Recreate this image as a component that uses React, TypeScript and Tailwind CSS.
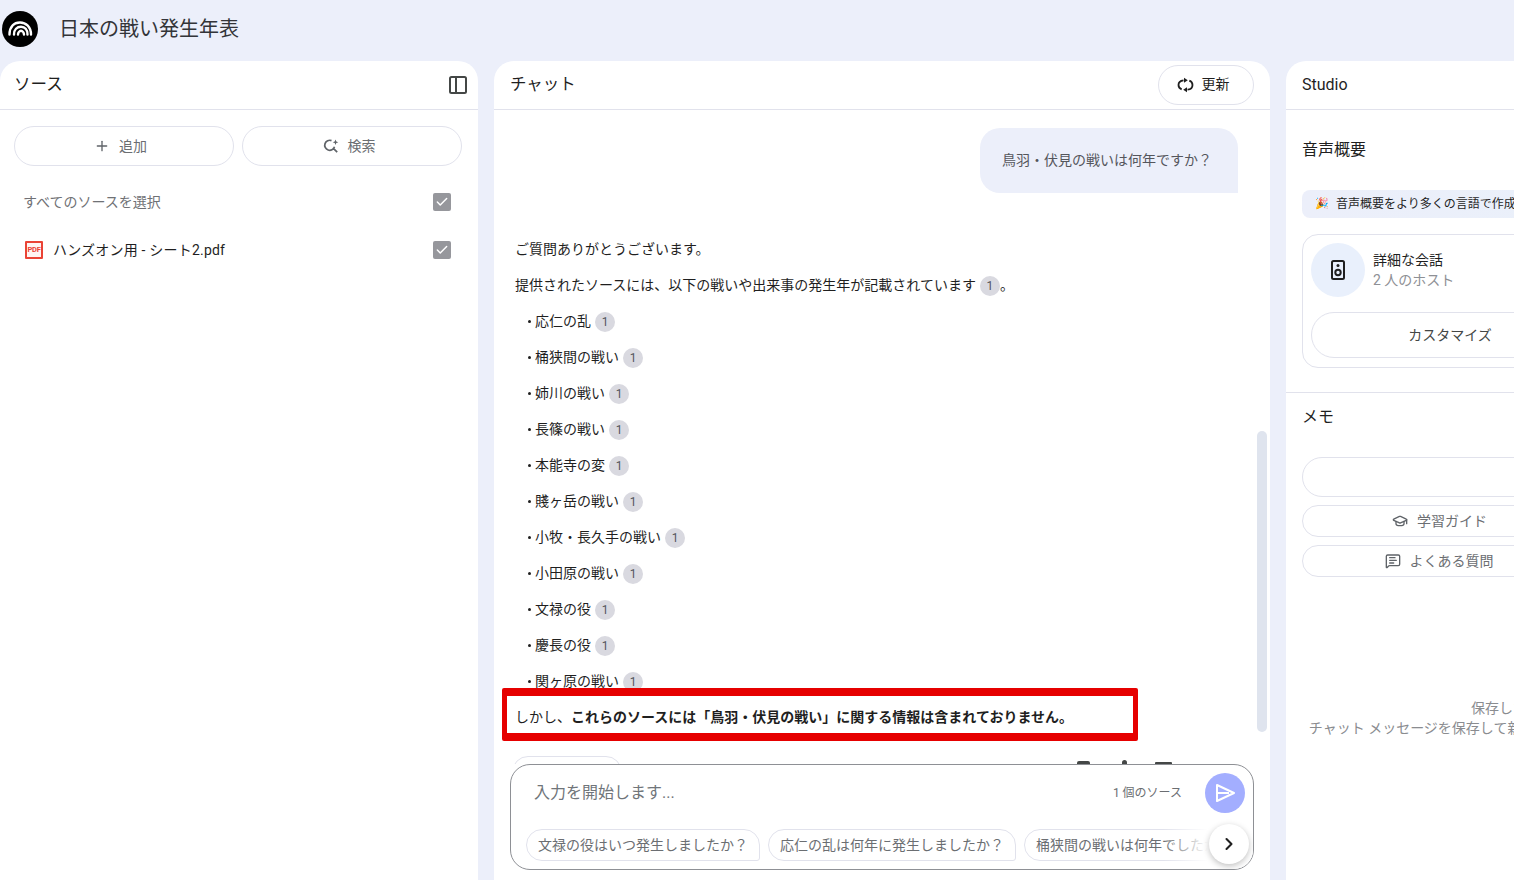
import { Plus, MessageSquareText, GraduationCap, ChevronRight, Check } from "lucide-react";

const FONT = "[font-family:Roboto,'Noto_Sans_CJK_JP',sans-serif]";
const items = ["応仁の乱", "桶狭間の戦い", "姉川の戦い", "長篠の戦い", "本能寺の変", "賤ヶ岳の戦い", "小牧・長久手の戦い", "小田原の戦い", "文禄の役", "慶長の役", "関ヶ原の戦い"];

function Cite() {
  return (
    <span className="ml-[4px] mt-[1px] inline-flex h-[20px] w-[20px] shrink-0 items-center justify-center rounded-full bg-[#d9d9e0] text-[12px] leading-none text-[#55565c]">1</span>
  );
}

function Box() {
  return (
    <span className="flex h-[18px] w-[18px] items-center justify-center rounded-[2px] bg-[#96979c]">
      <Check size={14} strokeWidth={2.5} className="text-white" />
    </span>
  );
}

function Logo() {
  return (
    <svg width="36" height="36" viewBox="0 0 36 36" className="ml-[2px] shrink-0">
      <circle cx="18" cy="18" r="18" fill="#000" />
      <g fill="none" stroke="#fff" strokeWidth="2.400" strokeLinecap="round">
        <path d="M7.500 23.500C7.500 15.500 12 11.500 18 11.500S29 16 29 23.500" />
        <path d="M12 23.500C12 18.500 15 15.800 19 15.800S25.500 18.800 25.500 23.500" />
        <path d="M16 23.500c0-2 1.500-3.700 3-3.700s3 1.700 3 3.700" />
      </g>
    </svg>
  );
}

export default function App() {
  return (
    <div className={`flex h-[880px] w-[1514px] flex-col overflow-hidden bg-[#eceffa] ${FONT}`}>
      <header className="flex h-[61px] shrink-0 items-center gap-[21px] pb-[4px]">
        <Logo />
        <h1 className="text-[20px] font-normal leading-[28px] text-[#333438]">日本の戦い発生年表</h1>
      </header>
      <main className="flex h-[819px] gap-[16px]">
        {/* Sources */}
        <section className="flex w-[478px] shrink-0 flex-col rounded-t-[20px] bg-white">
          <div className="flex h-[49px] shrink-0 items-center justify-between border-b border-[#e1e2ec] pl-[14px] pr-[10px]">
            <span className="text-[16.500px] text-[#1f1f1f]">ソース</span>
            <svg width="20" height="20" viewBox="0 0 20 20" fill="none" stroke="#444746" strokeWidth="2">
              <rect x="2" y="2" width="16" height="16" rx="1.500" />
              <path d="M8 2v16" />
            </svg>
          </div>
          <div className="grid grid-cols-2 gap-[8px] pb-[24px] pl-[14px] pr-[16px] pt-[16px]">
            <button className="flex h-[40px] items-center justify-center gap-[9px] rounded-full border border-[#e1e2ec] pr-[7px] text-[14px] text-[#6b6e72]">
              <Plus size={16} strokeWidth={2} className="text-[#5f6368]" />追加
            </button>
            <button className="flex h-[40px] items-center justify-center gap-[9px] rounded-full border border-[#e1e2ec] pr-[6px] text-[14px] text-[#6b6e72]">
              <svg width="16" height="16" viewBox="0 0 16 16" fill="none" stroke="#5f6368" strokeWidth="1.700">
                <path d="M8.500 2.600a5 5 0 1 0 3 6.200M9.800 9.800l4.400 4.400" />
                <path d="M12.500 1.500l.8 2 2 .8-2 .8-.8 2-.8-2-2-.8 2-.8z" fill="#5f6368" stroke="none" />
              </svg>
              検索
            </button>
          </div>
          <div className="flex h-[24px] items-center justify-between pl-[23px] pr-[27px] text-[14px] text-[#6f7175]">
            <span>すべてのソースを選択</span>
            <Box />
          </div>
          <div className="mt-[24px] flex h-[24px] items-center justify-between pl-[25px] pr-[27px] text-[14px] text-[#1f1f1f]">
            <span className="flex items-center gap-[10px]">
              <span className="flex h-[18px] w-[18px] items-center justify-center overflow-hidden rounded-[1px] border-2 border-[#ea4335] bg-[#fff4f2] text-[7.500px] font-bold leading-none tracking-[-0.3px] text-[#ea4335]">PDF</span>
              <span className="tracking-[0.2px]">ハンズオン用 - シート2.pdf</span>
            </span>
            <Box />
          </div>
        </section>

        {/* Chat */}
        <section className="flex w-[776px] shrink-0 flex-col rounded-t-[20px] bg-white pb-[10px]">
          <div className="flex h-[49px] shrink-0 items-center justify-between border-b border-[#e1e2ec] pl-[16px] pr-[16px]">
            <span className="text-[16.500px] text-[#1f1f1f]">チャット</span>
            <button className="mb-[1px] flex h-[40px] w-[96px] items-center justify-center gap-[8px] rounded-full border border-[#e1e2ec] pr-[6px] text-[14px] text-[#1f1f1f]">
              <svg width="17" height="16" viewBox="0 0 17 16" fill="none" stroke="#1f1f1f" strokeWidth="1.800">
                <path d="M6.500 3.300C3.500 3.600 1.500 5.500 1.500 8c0 2 1.300 3.600 3.200 4.300" />
                <path d="M10.500 12.700c3-.3 5-2.200 5-4.700 0-2-1.300-3.600-3.200-4.300" />
                <path d="M7 .8l3.800 2.500L7 5.800zM10 10.200l-3.800 2.500 3.800 2.500z" fill="#1f1f1f" stroke="none" />
              </svg>
              更新
            </button>
          </div>
          <div className="relative h-[654px] shrink-0 overflow-hidden pl-[21px] pr-[32px] text-[14px] text-[#1f1f1f]">
            <div className="mt-[18px] flex justify-end">
              <div className="flex h-[65px] w-[258px] items-center rounded-t-[20px] rounded-bl-[20px] bg-[#eceffa] pl-[22px] text-[#55565c]">鳥羽・伏見の戦いは何年ですか？</div>
            </div>
            <div className="mt-[38px] leading-[36px]">
              <p className="h-[36px]">ご質問ありがとうございます。</p>
              <p className="flex h-[36px] items-center">
                提供されたソースには、以下の戦いや出来事の発生年が記載されています<Cite />。
              </p>
              {items.map((t) => (
                <div key={t} className="flex h-[36px] items-center pl-[13px]">
                  <span className="mr-[4px] h-[3px] w-[3px] rounded-full bg-[#1f1f1f]" />
                  {t}
                  <Cite />
                </div>
              ))}
              <p className="h-[36px]">
                しかし、<strong className="font-bold">これらのソースには「鳥羽・伏見の戦い」に関する情報は含まれておりません。</strong>
              </p>
              <div className="relative mt-[21px] h-[32px]">
                <div className="ml-[-3px] h-[32px] w-[110px] rounded-full border border-[#e1e2ec]" />
                <span className="absolute left-[562px] top-[5px] h-[16px] w-[13px] rounded-t-[2px] bg-[#444746]" />
                <span className="absolute left-[607px] top-[4px] h-[16px] w-[5px] rounded-t-full bg-[#444746]" />
                <span className="absolute left-[640px] top-[6px] h-[16px] w-[17px] rounded-t-[1px] bg-[#444746]" />
              </div>
            </div>
            {/* scrollbar */}
            <div className="absolute left-[763px] top-[321px] h-[301px] w-[10px] rounded-full bg-[#dfe4ee]" />
            {/* annotation */}
            <div className="pointer-events-none absolute left-[8px] top-[578px] h-[53px] w-[636px] rounded-[2px] border-x-[5px] border-y-[8px] border-[#e60000]" />
          </div>
          <div className="relative mx-[16px] h-[106px] shrink-0 overflow-hidden rounded-[20px] border border-[#8e9095] bg-white">
            <div className="flex h-[55px] items-center justify-between pl-[23px] pr-[8px]">
              <span className="text-[16px] text-[#70757a]">入力を開始します...</span>
              <div className="flex items-center gap-[23px]">
                <span className="text-[12px] text-[#6b6e72]">1 個のソース</span>
                <span className="flex h-[40px] w-[40px] items-center justify-center rounded-full bg-[#a3aeff]">
                  <svg width="22" height="20" viewBox="0 0 22 20" fill="none" stroke="#fff" strokeWidth="2" strokeLinejoin="round">
                    <path d="M3 2l17 8-17 8zM3 10h12" />
                  </svg>
                </span>
              </div>
            </div>
            <div className="ml-[15px] mt-[9px] flex gap-[8px] whitespace-nowrap text-[14px] text-[#6b6e72]">
              <span className="flex h-[32px] w-[234px] shrink-0 items-center justify-center rounded-[16px] rounded-br-[3px] border border-[#e1e2ec]">文禄の役はいつ発生しましたか？</span>
              <span className="flex h-[32px] w-[248px] shrink-0 items-center justify-center rounded-[16px] rounded-br-[3px] border border-[#e1e2ec]">応仁の乱は何年に発生しましたか？</span>
              <span className="flex h-[32px] w-[240px] shrink-0 items-center rounded-[16px] rounded-br-[3px] border border-[#e1e2ec] pl-[11px]">桶狭間の戦いは何年でしたか？</span>
            </div>
            <div className="absolute bottom-0 right-0 h-[50px] w-[90px] bg-gradient-to-r from-transparent via-white to-white" />
            <span className="absolute left-[698px] top-[59px] flex h-[40px] w-[40px] items-center justify-center rounded-full bg-white shadow-[0_2px_6px_rgba(0,0,0,0.25)]">
              <ChevronRight size={20} strokeWidth={2.5} className="text-[#1f1f1f]" />
            </span>
          </div>
        </section>

        {/* Studio */}
        <section className="flex w-[594px] shrink-0 flex-col rounded-t-[20px] bg-white">
          <div className="flex h-[49px] shrink-0 items-center border-b border-[#e1e2ec] pl-[16px] text-[16px] text-[#1f1f1f]">Studio</div>
          <div className="border-b border-[#e1e2ec] px-[16px] pb-[24px]">
            <h2 className="mt-[28px] text-[16px] font-normal leading-[24px] text-[#1f1f1f]">音声概要</h2>
            <div className="mt-[28px] flex h-[28px] items-center gap-[7px] whitespace-nowrap rounded-[8px] bg-gradient-to-r from-[#eceffa] to-[#e8f1fa] pl-[13px] text-[12px] text-[#1f1f1f]">
              <span className="text-[11px]">🎉</span>音声概要をより多くの言語で作成できるようになりました
            </div>
            <div className="mt-[16px] h-[134px] rounded-[16px] border border-[#e1e2ec] px-[8px] pt-[8px]">
              <div className="flex h-[54px] items-center gap-[8px]">
                <span className="flex h-[54px] w-[54px] items-center justify-center rounded-full bg-[#e9f0fc]">
                  <svg width="14" height="20" viewBox="0 0 14 20" fill="none" stroke="#1f1f1f" strokeWidth="2">
                    <rect x="1" y="1" width="12" height="18" rx="1.500" />
                    <circle cx="7" cy="12.500" r="2.700" />
                    <circle cx="7" cy="5.500" r="1.500" fill="#1f1f1f" stroke="none" />
                  </svg>
                </span>
                <div className="flex flex-col">
                  <span className="text-[14px] leading-[20px] text-[#1f1f1f]">詳細な会話</span>
                  <span className="text-[14px] leading-[20px] text-[#8e9095]">2 人のホスト</span>
                </div>
              </div>
              <div className="mt-[15px] grid grid-cols-[278px_1fr] gap-[8px]">
                <button className="flex h-[46px] items-center justify-center rounded-full border border-[#e1e2ec] text-[14px] text-[#444746]">カスタマイズ</button>
                <button className="flex h-[46px] items-center justify-center rounded-full border border-[#e1e2ec] text-[14px] text-[#444746]">生成</button>
              </div>
            </div>
          </div>
          <div className="px-[16px]">
            <h2 className="mt-[12px] text-[16px] font-normal leading-[24px] text-[#1f1f1f]">メモ</h2>
            <button className="mt-[28px] flex h-[40px] w-full items-center justify-center rounded-full border border-[#e1e2ec] text-[14px] text-[#6b6e72]">メモを追加</button>
            <div className="mt-[8px] grid grid-cols-2 gap-[8px] text-[14px] text-[#6b6e72]">
              <button className="flex h-[32px] items-center justify-center gap-[9px] rounded-full border border-[#e1e2ec] pr-[2px]">
                <GraduationCap size={16} strokeWidth={2} className="text-[#5f6368]" />学習ガイド
              </button>
              <button className="flex h-[32px] items-center justify-center rounded-full border border-[#e1e2ec]">ドキュメント</button>
              <button className="flex h-[32px] items-center justify-center gap-[9px] rounded-full border border-[#e1e2ec] pr-[3px]">
                <MessageSquareText size={16} strokeWidth={2} className="text-[#5f6368]" />よくある質問
              </button>
              <button className="flex h-[32px] items-center justify-center rounded-full border border-[#e1e2ec]">タイムライン</button>
            </div>
            <div className="mt-[121px] whitespace-nowrap text-center text-[14px] leading-[20px] text-[#8a8c90]">
              <p>保存したメモがここに表示されます</p>
              <p>チャット メッセージを保存して新しいメモを作成するか、上のボタンから追加できます</p>
            </div>
          </div>
        </section>
      </main>
    </div>
  );
}
